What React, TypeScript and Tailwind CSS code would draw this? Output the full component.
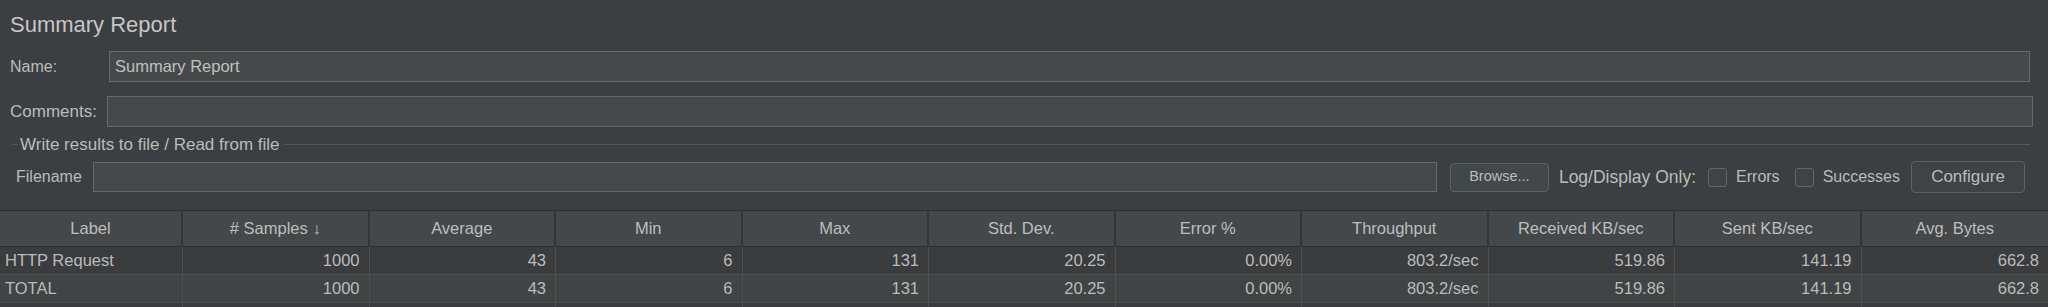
import React from 'react';

const columns = [
  'Label',
  '# Samples ↓',
  'Average',
  'Min',
  'Max',
  'Std. Dev.',
  'Error %',
  'Throughput',
  'Received KB/sec',
  'Sent KB/sec',
  'Avg. Bytes',
];

const values = ['1000', '43', '6', '131', '20.25', '0.00%', '803.2/sec', '519.86', '141.19', '662.8'];

const rows = [
  { label: 'HTTP Request', bg: 'bg-[#3a3c3e]' },
  { label: 'TOTAL', bg: 'bg-[#404445]' },
];

function Checkbox({ label }: { label: string }) {
  return (
    <div className="flex items-center">
      <div className="w-[19px] h-[19px] rounded-[3px] border border-[#62666a] bg-[#3f4345]" />
      <span className="ml-[9px] text-[16px]">{label}</span>
    </div>
  );
}

export default function App() {
  return (
    <div
      className="w-[2048px] h-[307px] overflow-hidden bg-[#3c3f41] text-[#bbbbbb]"
      style={{ fontFamily: '"Liberation Sans", Arial, sans-serif' }}
    >
      {/* title */}
      <div className="h-[49px] flex items-center pl-[10px] text-[22px] text-[#c6c6c6]">Summary Report</div>

      {/* name */}
      <div className="mt-[2px] h-[31px] flex items-center pl-[10px] pr-[18px]">
        <span className="w-[99px] text-[16px]">Name:</span>
        <div className="flex-1 h-full flex items-center px-[5px] bg-[#45494a] border border-[#66696b] text-[16.5px] text-[#c0c0c0]">
          Summary Report
        </div>
      </div>

      {/* comments */}
      <div className="mt-[14px] h-[31px] flex items-center pl-[10px] pr-[15px]">
        <span className="w-[97px] text-[17px]">Comments:</span>
        <div className="flex-1 h-full bg-[#45494a] border border-[#66696b]" />
      </div>

      {/* file group */}
      <div className="h-[35px] flex items-center pl-[12px] pr-[18px]">
        <div className="w-[6px] h-[1px] bg-[#545759]" />
        <span className="ml-[2px] text-[17px]">Write results to file / Read from file</span>
        <div className="ml-[4px] flex-1 h-[1px] bg-[#545759]" />
      </div>

      <div className="h-[30px] flex items-center pl-[16px] pr-[23px]">
        <span className="w-[77px] text-[16px]">Filename</span>
        <div className="flex-1 h-full bg-[#45494a] border border-[#66696b]" />
        <button className="ml-[13px] w-[99px] h-[29px] rounded-[4px] border border-[#5d6163] bg-[#42474a] text-[14.5px] text-[#bbbbbb]">
          Browse...
        </button>
        <span className="ml-[10px] text-[17.5px]">Log/Display Only:</span>
        <div className="ml-[12px]">
          <Checkbox label="Errors" />
        </div>
        <div className="ml-[15px]">
          <Checkbox label="Successes" />
        </div>
        <button className="ml-[11px] w-[114px] h-[32px] rounded-[4px] border border-[#5d6163] bg-[#3f4346] text-[17px] text-[#bbbbbb]">
          Configure
        </button>
      </div>

      {/* table */}
      <div className="mt-[18px] border-t border-[#2e3032]">
        <div className="grid grid-cols-[183px_repeat(10,minmax(0,1fr))] h-[36px] bg-[#45484a] border-b border-[#2f3133]">
          {columns.map((c, i) => (
            <div
              key={c}
              className={`flex items-center justify-center text-[16.5px] text-[#bdbdbd] ${i < columns.length - 1 ? 'border-r-2 border-[#343638]' : ''}`}
            >
              {c}
            </div>
          ))}
        </div>
        {rows.map((r) => (
          <div
            key={r.label}
            className={`grid grid-cols-[183px_repeat(10,minmax(0,1fr))] h-[28px] border-b border-[#4c5052] ${r.bg}`}
          >
            <div className="flex items-center pl-[5px] text-[16.5px] border-r border-[#4c5052]">{r.label}</div>
            {values.map((v, i) => (
              <div
                key={i}
                className={`flex items-center justify-end pr-[9px] text-[16.5px] ${i < values.length - 1 ? 'border-r border-[#4c5052]' : ''}`}
              >
                {v}
              </div>
            ))}
          </div>
        ))}
        <div className="grid grid-cols-[183px_repeat(10,minmax(0,1fr))] h-[28px] bg-[#3a3c3e]">
          {columns.map((c, i) => (
            <div key={c} className={i < columns.length - 1 ? 'border-r border-[#4c5052]' : ''} />
          ))}
        </div>
      </div>
    </div>
  );
}
